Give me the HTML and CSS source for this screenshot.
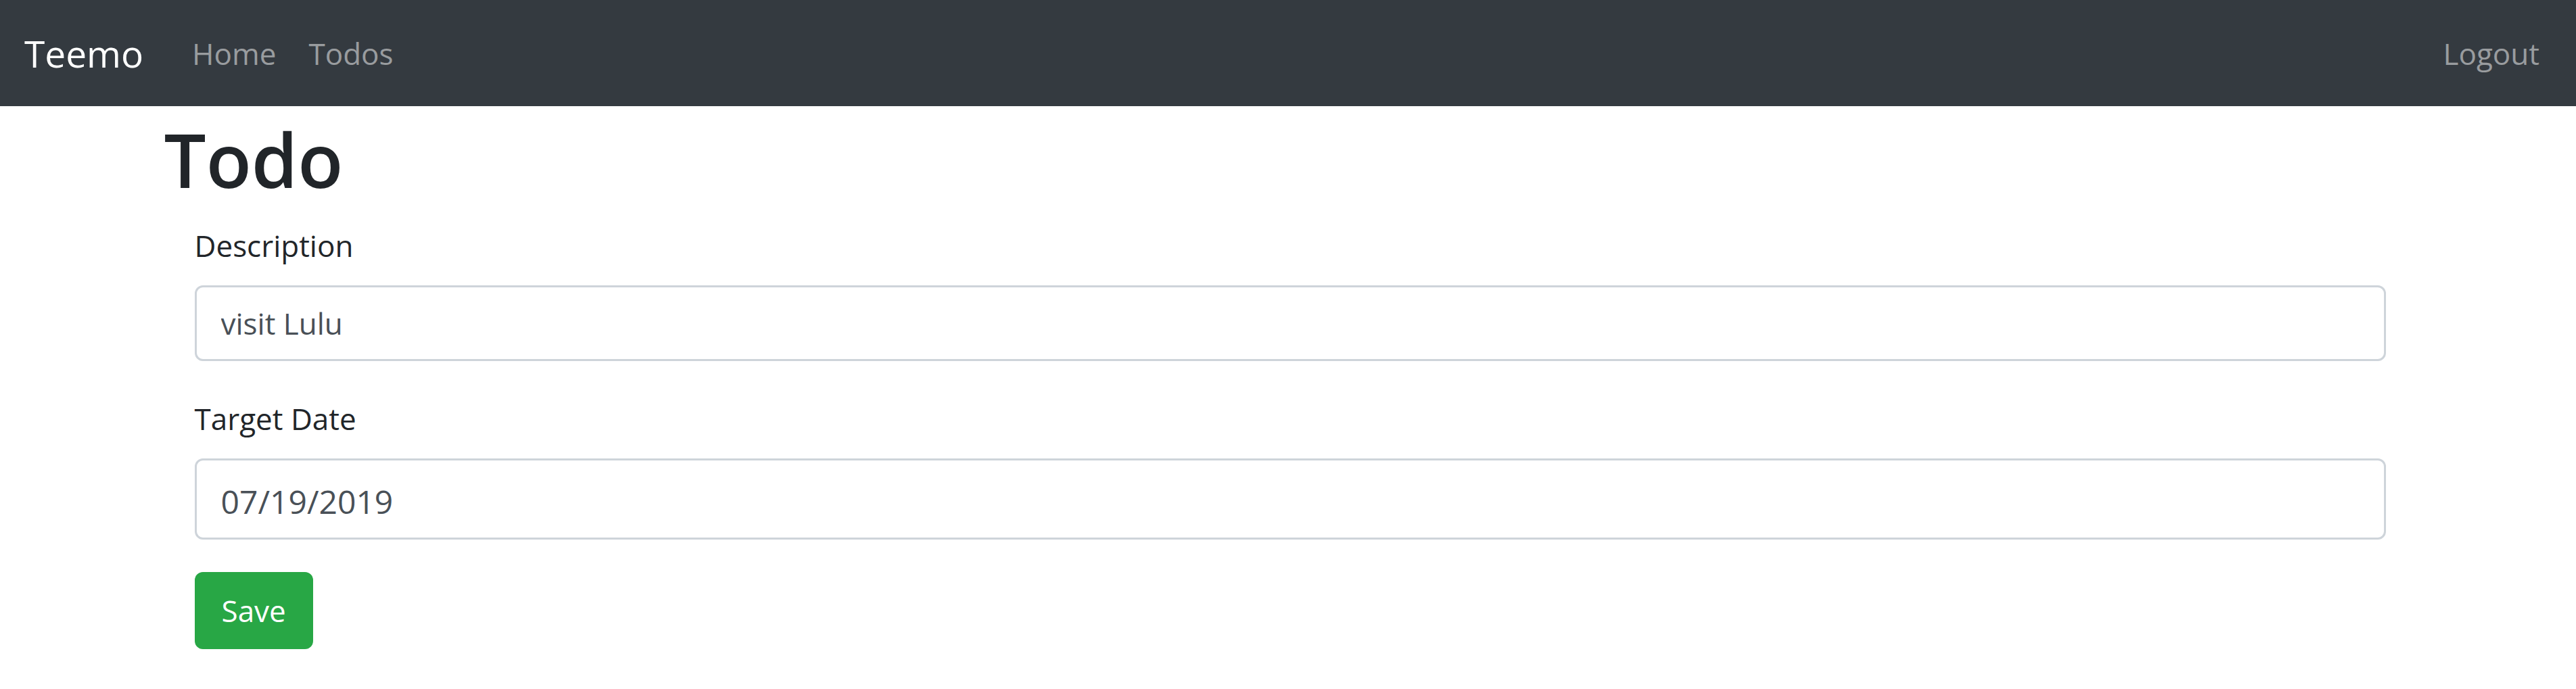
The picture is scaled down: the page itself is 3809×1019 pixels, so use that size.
FILE: index.html
```html
<!DOCTYPE html>
<html lang="en">
<head>
<meta charset="utf-8">
<title>Todo</title>
<link rel="stylesheet" href="styles.css">
</head>
<body>
<nav class="navbar">
  <a class="brand" href="#">Teemo</a>
  <ul class="nav">
    <li><a class="nav-link" href="#">Home</a></li>
    <li><a class="nav-link" href="#">Todos</a></li>
  </ul>
  <ul class="nav nav-right">
    <li><a class="nav-link" href="#">Logout</a></li>
  </ul>
</nav>
<main class="container">
  <h1 class="title">Todo</h1>
  <form class="todo-form">
    <div class="form-group">
      <label class="form-label" for="desc">Description</label>
      <input class="form-control" id="desc" type="text" value="visit Lulu">
    </div>
    <div class="form-group">
      <label class="form-label" for="date">Target Date</label>
      <input class="form-control form-control-date" id="date" type="text" value="07/19/2019">
    </div>
    <button class="btn-save" type="submit">Save</button>
  </form>
</main>
</body>
</html>
```
FILE: styles.css
```css
* {
  box-sizing: border-box;
}

html, body {
  margin: 0;
  padding: 0;
  background: #fff;
}

body {
  font-family: "Open Sans", "Noto Sans", sans-serif;
  font-size: 44px;
  line-height: 72px;
  color: #212529;
}

.navbar {
  display: flex;
  align-items: center;
  height: 157px;
  padding: 0 30px 0 36px;
  background: #343a40;
}

.brand {
  font-size: 55px;
  line-height: 82px;
  color: #fff;
  text-decoration: none;
  margin-right: 48px;
}

.nav {
  display: flex;
  list-style: none;
  margin: 0;
  padding: 0;
}

.nav-right {
  margin-left: auto;
}

.nav-link {
  display: block;
  padding: 0 24px;
  color: rgba(255, 255, 255, 0.5);
  text-decoration: none;
  font-size: 44px;
  line-height: 72px;
}

.container {
  width: 3420px;
  margin: 0 auto;
  padding: 0 45px;
}

.title {
  margin: 12px 0 25px;
  padding-left: 3px;
  font-size: 110px;
  font-weight: 600;
  line-height: 132px;
  color: #212529;
}

.todo-form {
  margin: 0 42px 0 48px;
}

.form-group {
  margin-bottom: 48px;
}

.form-label {
  display: block;
  margin-bottom: 24px;
  padding-top: 2px;
  line-height: 70px;
}

.form-control {
  display: block;
  width: 100%;
  height: 112px;
  padding: 0 36px;
  border: 3px solid #ced4da;
  border-radius: 12px;
  background: #fff;
  font-family: "Open Sans", "Noto Sans", sans-serif;
  font-size: 44px;
  color: #495057;
  outline: none;
}

.form-control-date {
  height: 120px;
  padding-top: 6px;
  font-size: 48px;
}

.btn-save {
  display: block;
  height: 114px;
  padding: 0 40px;
  border: none;
  border-radius: 12px;
  background: #28a745;
  color: #fff;
  font-family: "Open Sans", "Noto Sans", sans-serif;
  font-size: 44px;
  cursor: pointer;
}
```
